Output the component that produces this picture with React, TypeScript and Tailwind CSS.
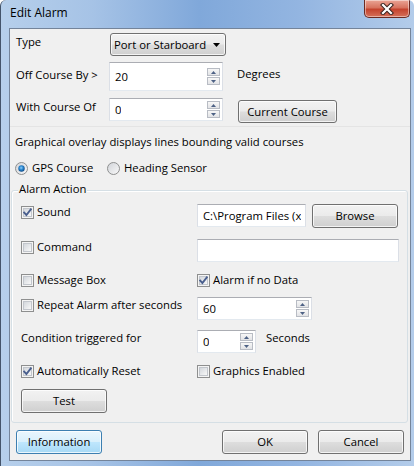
import React from "react";

const btnBg =
  "bg-[linear-gradient(to_bottom,#f2f2f2_0%,#ebebeb_48%,#dddddd_52%,#cfcfcf_100%)]";

function Btn({ className, children, focus }: { className: string; children: React.ReactNode; focus?: boolean }) {
  return (
    <div
      className={
        "flex items-center justify-center rounded-[3px] border leading-[16px] shadow-[inset_0_0_0_1px_rgba(255,255,255,0.75)] " +
        (focus
          ? "border-[#3c7fb1] bg-[linear-gradient(to_bottom,#eaf6fd_0%,#d9f0fc_48%,#bee6fd_52%,#a7d9f5_100%)] "
          : "border-[#707070] " + btnBg + " ") +
        className
      }
    >
      {children}
    </div>
  );
}

function SpinBtn({ up }: { up?: boolean }) {
  return (
    <div className="flex h-[8px] w-[13px] items-center justify-center border border-[#b8bcc4] bg-[linear-gradient(to_bottom,#f7f7f7,#e2e3e6)]">
      <svg width="5" height="3" viewBox="0 0 5 3">
        {up ? (
          <polygon points="0,3 2.5,0 5,3" fill="#4d6185" />
        ) : (
          <polygon points="0,0 5,0 2.5,3" fill="#4d6185" />
        )}
      </svg>
    </div>
  );
}

function Field({ className, value, spin }: { className: string; value?: string; spin?: boolean }) {
  return (
    <div
      className={
        "flex items-center justify-between overflow-hidden whitespace-nowrap border border-t-[#abadb3] border-x-[#dbdfe6] border-b-[#e3e9ef] bg-white " +
        className
      }
    >
      <span className="overflow-hidden pl-[5px] leading-[16px]">{value}</span>
      {spin && (
        <div className="mr-[2px] flex shrink-0 flex-col gap-[1px]">
          <SpinBtn up />
          <SpinBtn />
        </div>
      )}
    </div>
  );
}

function Check({ checked, label }: { checked?: boolean; label: string }) {
  return (
    <div className="flex h-[16px] items-center gap-[3px]">
      <div className="relative h-[13px] w-[13px] shrink-0 border border-[#8e8f8f] bg-[#f4f4f4] p-[1px]">
        <div className="h-[9px] w-[9px] border border-[#c2c6cc] bg-[linear-gradient(135deg,#d3d7dc,#f8f8f8)]" />
        {checked && (
          <svg className="absolute left-[0px] top-[0px]" width="11" height="11" viewBox="0 0 11 11">
            <path d="M2.2 5.6 L4.4 8 L8.8 2.4" fill="none" stroke="#4a5f8e" strokeWidth="1.9" strokeLinecap="square" />
          </svg>
        )}
      </div>
      <span className="leading-[16px]">{label}</span>
    </div>
  );
}

function Radio({ checked, label }: { checked?: boolean; label: string }) {
  return (
    <div className="flex h-[16px] items-center gap-[4px]">
      <svg width="13" height="13" viewBox="0 0 13 13">
        <defs>
          <linearGradient id={"rg" + (checked ? "a" : "b")} x1="0" y1="0" x2="1" y2="1">
            <stop offset="0" stopColor="#d0d3d8" />
            <stop offset="1" stopColor="#fafafa" />
          </linearGradient>
          <radialGradient id="rdot" cx="0.45" cy="0.4" r="0.6">
            <stop offset="0" stopColor="#8fd0fb" />
            <stop offset="0.5" stopColor="#2a86cf" />
            <stop offset="1" stopColor="#0d4a86" />
          </radialGradient>
        </defs>
        <circle cx="6.5" cy="6.5" r="6" fill={"url(#rg" + (checked ? "a" : "b") + ")"} stroke="#8e8f8f" strokeWidth="1" />
        {checked && <circle cx="6.5" cy="6.5" r="3.2" fill="url(#rdot)" />}
      </svg>
      <span className="leading-[16px]">{label}</span>
    </div>
  );
}

export default function App() {
  return (
    <div className="flex h-[466px] w-[414px] flex-col overflow-hidden rounded-t-[6px] border-l border-[#44546a] bg-[linear-gradient(to_right,#b6cfeb_0%,#a6c3e6_22%,#80a8da_48%,#93b5e1_72%,#b3ccea_100%)] font-['Open_Sans',sans-serif] text-[11.3px] text-black">
      {/* Title bar */}
      <div className="flex h-[28px] shrink-0 items-start justify-between">
        <div className="pl-[9px] pt-[5px] text-[12px] leading-[16px]">Edit Alarm</div>
        <div className="mr-[4px] flex h-[18px] w-[46px] items-center justify-center rounded-b-[5px] border border-t-0 border-[#6b2a22] bg-[linear-gradient(to_bottom,#eaa596_0%,#d7735f_45%,#c4432e_55%,#d5705a_100%)] shadow-[inset_0_0_0_1px_rgba(255,255,255,0.45)]">
          <svg width="14" height="12" viewBox="0 0 14 12">
            <path d="M3 2 L11 10 M11 2 L3 10" stroke="#3a2420" strokeWidth="4.2" strokeLinecap="square" />
            <path d="M3 2 L11 10 M11 2 L3 10" stroke="#ffffff" strokeWidth="2.2" strokeLinecap="square" />
          </svg>
        </div>
      </div>

      {/* Client */}
      <div className="ml-[8px] flex h-[433px] w-[402px] flex-col border border-[#74849a] bg-[#f0f0f0]">
        {/* Type */}
        <div className="mt-[4px] flex h-[23px] items-start">
          <div className="mt-[1px] w-[100px] pl-[6px] leading-[16px]">Type</div>
          <Btn className="h-[23px] w-[116px] !justify-between pl-[3px] pr-[5px]">
            <span>Port or Starboard</span>
            <svg width="7" height="4" viewBox="0 0 7 4">
              <polygon points="0,0 7,0 3.5,4" fill="#000" />
            </svg>
          </Btn>
        </div>

        {/* Off course */}
        <div className="mt-[6px] flex items-start">
          <div className="mt-[5px] w-[99px] pl-[6px] leading-[16px]">Off Course By &gt;</div>
          <Field className="h-[29px] w-[114px]" value="20" spin />
          <div className="ml-[14px] mt-[4px] leading-[16px]">Degrees</div>
        </div>

        {/* With course */}
        <div className="mt-[7px] flex items-start">
          <div className="mt-[1px] w-[99px] pl-[6px] leading-[16px]">With Course Of</div>
          <Field className="h-[23px] w-[114px]" value="0" spin />
          <Btn className="ml-[15px] mt-[2px] h-[23px] w-[99px]">Current Course</Btn>
        </div>

        <div className="mt-[3px] h-px bg-[#e4e4e4]" />

        <div className="mt-[7px] pl-[5px] leading-[16px]">Graphical overlay displays lines bounding valid courses</div>

        <div className="mt-[10px] flex h-[16px] items-center pl-[5px]">
          <div className="w-[92px]">
            <Radio checked label="GPS Course" />
          </div>
          <Radio label="Heading Sensor" />
        </div>

        {/* Alarm Action group */}
        <div className="relative ml-[1px] mt-[14px] flex h-[233px] w-[397px] flex-col rounded-[3px] border border-[#d5dfe5] shadow-[inset_1px_1px_0_#ffffff]">
          <div className="absolute left-[6px] top-[-10px] bg-[#f0f0f0] px-[1px] leading-[16px]">Alarm Action</div>

          <div className="mt-[13px] flex items-start">
            <div className="w-[185px] pl-[9px]">
              <Check checked label="Sound" />
            </div>
            <Field className="h-[23px] w-[109px]" value="C:\Program Files (x" />
            <Btn className="ml-[6px] h-[24px] w-[86px]">Browse</Btn>
          </div>

          <div className="mt-[11px] flex items-start">
            <div className="w-[185px] pl-[9px]">
              <Check label="Command" />
            </div>
            <Field className="h-[23px] w-[202px]" value="" />
          </div>

          <div className="mt-[10px] flex h-[16px] items-center">
            <div className="w-[185px] pl-[9px]">
              <Check label="Message Box" />
            </div>
            <Check checked label="Alarm if no Data" />
          </div>

          <div className="mt-[9px] flex items-start">
            <div className="w-[185px] pl-[9px]">
              <Check label="Repeat Alarm after seconds" />
            </div>
            <Field className="h-[23px] w-[115px]" value="60" spin />
          </div>

          <div className="mt-[10px] flex items-start">
            <div className="w-[185px] pl-[9px] leading-[16px]">Condition triggered for</div>
            <Field className="h-[23px] w-[59px]" value="0" spin />
            <div className="ml-[10px] leading-[16px]">Seconds</div>
          </div>

          <div className="mt-[10px] flex h-[16px] items-center">
            <div className="w-[185px] pl-[9px]">
              <Check checked label="Automatically Reset" />
            </div>
            <Check label="Graphics Enabled" />
          </div>

          <Btn className="ml-[9px] mt-[10px] h-[24px] w-[86px]">Test</Btn>
        </div>

        {/* Bottom buttons */}
        <div className="mt-[7px] flex">
          <Btn focus className="ml-[6px] h-[24px] w-[86px]">Information</Btn>
          <Btn className="ml-[120px] h-[24px] w-[86px]">OK</Btn>
          <Btn className="ml-[10px] h-[24px] w-[86px]">Cancel</Btn>
        </div>
      </div>
    </div>
  );
}
